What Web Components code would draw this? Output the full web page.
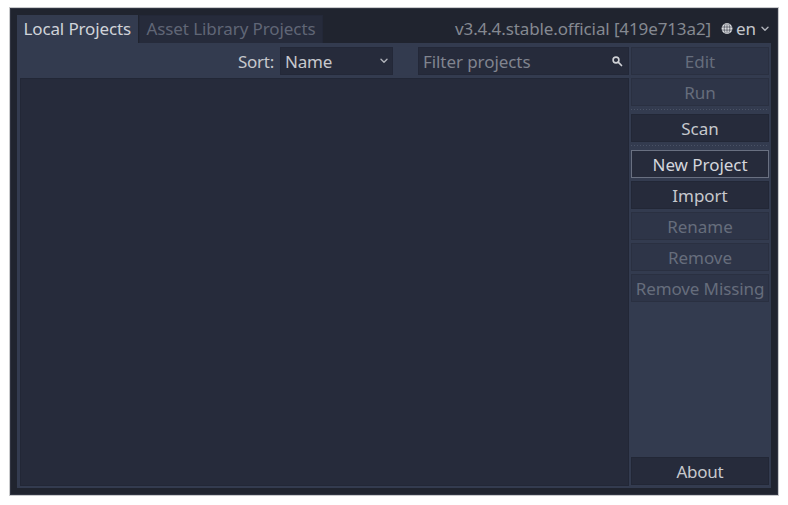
<!DOCTYPE html>
<html lang="en"><head><meta charset="utf-8"><title>Project Manager</title>
<style>
html,body{margin:0;background:#fff;height:505px;overflow:hidden}
body{font:17px/28px "Noto Sans","Open Sans",sans-serif;color:#c6c8cd}
</style></head><body>
<project-manager></project-manager>
<script>
const define=(name,html,setup)=>customElements.define(name,class extends HTMLElement{
  connectedCallback(){
    if(this.shadowRoot)return;
    const t=document.createElement('template');t.innerHTML=html;
    this.attachShadow({mode:'open'}).append(t.content.cloneNode(true));
    if(setup)setup(this);
  }
});
define('chevron-icon',`<style>:host{display:block;width:8px;height:6px}svg{display:block}</style>
<svg width="8" height="6" viewBox="0 0 8 6" fill="none" stroke="#b0b3ba" stroke-width="1.4" stroke-linecap="round" stroke-linejoin="round"><path d="M1 1.3 4 4.3 7 1.3"/></svg>`);
define('search-icon',`<style>:host{display:block;width:11px;height:11px}svg{display:block}</style>
<svg width="11" height="11" viewBox="0 0 11 11" fill="none" stroke="#d0d2d6"><circle cx="4" cy="4" r="2.9" stroke-width="1.6"/><path d="M6.2 6.2 9.5 9.5" stroke-width="1.7" stroke-linecap="round"/></svg>`);
define('globe-icon',`<style>:host{display:block;width:12px;height:12px}svg{display:block}</style>
<svg width="12" height="12" viewBox="0 0 12 12"><circle cx="6" cy="5.5" r="5.4" fill="#dddfe2"/><path d="M1 4H11M1 7.1H11M6 .5V10.5M4.2 1C2.9 4 2.9 7 4.2 10M7.8 1C9.1 4 9.1 7 7.8 10" fill="none" stroke="#3b404c" stroke-width=".65"/></svg>`);
define('tab-item',`<style>:host{display:block;box-sizing:border-box;height:28px;padding-left:5.5px;background:#262b3b;color:#606676;white-space:nowrap;border:1px solid #232838;border-bottom:0;line-height:26px}
:host([active]){background:#333b4f;color:#d0d3d9;border-color:#333b4f}</style><slot></slot>`);
define('pm-button',`<style>:host{display:block;box-sizing:border-box;height:28px;border:1px solid #222736;background:#262b3b;text-align:center;line-height:27px;white-space:nowrap}
:host([disabled]){background:#2e3548;border-color:#2a3041;color:#666d7c}
:host([focused]){border-color:#697081;color:#d4d6dc}</style><slot></slot>`);
define('pm-separator',`<style>:host{display:block;height:2px}div{height:1px;background:repeating-linear-gradient(90deg,#4a5265 0 1px,#333b4f 1px 3px)}</style><div></div>`);
define('pm-field',`<style>:host{display:flex;box-sizing:border-box;height:28px;align-items:center;justify-content:space-between;background:#262b3b;border:1px solid #232838;line-height:27px;padding:0 4px}</style><slot></slot><slot name="icon"></slot>`);
define('project-manager',`<style>
:host{display:flex;flex-direction:column;box-sizing:border-box;width:768px;height:487px;margin:8px 0 0 10px;padding:7px 7px;background:#20242f;box-shadow:inset 0 0 0 1px #303441,0 0 0 1px #c9cacc}
header{display:flex;height:28px;flex:none}
.v{margin-left:auto;color:#858991}
.lang{display:flex;align-items:center;width:50px;margin-left:10px}
.lang span{margin-left:3px;flex:1}
.lang chevron-icon{margin-right:2px}
main{display:flex;gap:2px;height:445px;box-sizing:border-box;padding:4px 2px 2px 3px;background:#333b4f}
section{width:609px;display:flex;flex-direction:column;gap:3px}
.bar{display:flex;height:28px;justify-content:flex-end;line-height:29px}
.list{height:408px;box-sizing:border-box;background:#262b3b;border:1px solid #222736}
aside{width:138px;display:flex;flex-direction:column;gap:3px}
.about{margin-top:auto;margin-bottom:1px}
</style>
<header><tab-item active style="width:121px"><fit-text w="107.5">Local Projects</fit-text></tab-item><tab-item style="width:184px;margin-left:1px;padding-left:6.5px"><fit-text w="169">Asset Library Projects</fit-text></tab-item>
<fit-text class="v" w="256">v3.4.4.stable.official [419e713a2]</fit-text>
<div class="lang"><globe-icon></globe-icon><span>en</span><chevron-icon></chevron-icon></div></header>
<main><section><div class="bar"><fit-text w="36" style="margin-right:6px">Sort:</fit-text>
<pm-field style="width:113px"><fit-text w="47">Name</fit-text><chevron-icon slot="icon"></chevron-icon></pm-field>
<pm-field style="width:211px;margin-left:25px;padding-right:5px;color:#80848f"><fit-text w="107.5">Filter projects</fit-text><search-icon slot="icon"></search-icon></pm-field></div><div class="list"></div></section>
<aside><pm-button disabled>Edit</pm-button><pm-button disabled>Run</pm-button><pm-separator></pm-separator><pm-button><fit-text w="37.5">Scan</fit-text></pm-button><pm-separator></pm-separator><pm-button focused><fit-text w="95">New Project</fit-text></pm-button><pm-button><fit-text w="55.5">Import</fit-text></pm-button><pm-button disabled><fit-text w="65.5">Rename</fit-text></pm-button><pm-button disabled><fit-text w="64">Remove</fit-text></pm-button><pm-button disabled><fit-text w="128.5">Remove Missing</fit-text></pm-button><pm-button class="about"><fit-text w="47">About</fit-text></pm-button></aside></main>`);
/* Inline label whose letter spacing is adjusted so that it takes the width given in "w". */
define('fit-text',`<style>:host{display:inline-block;white-space:nowrap;flex:none}</style><slot></slot>`,el=>{
  const w=+el.getAttribute('w'),n=el.textContent.length;
  el.style.letterSpacing=(w-el.getBoundingClientRect().width)/n+'px';
});
</script></body></html>
